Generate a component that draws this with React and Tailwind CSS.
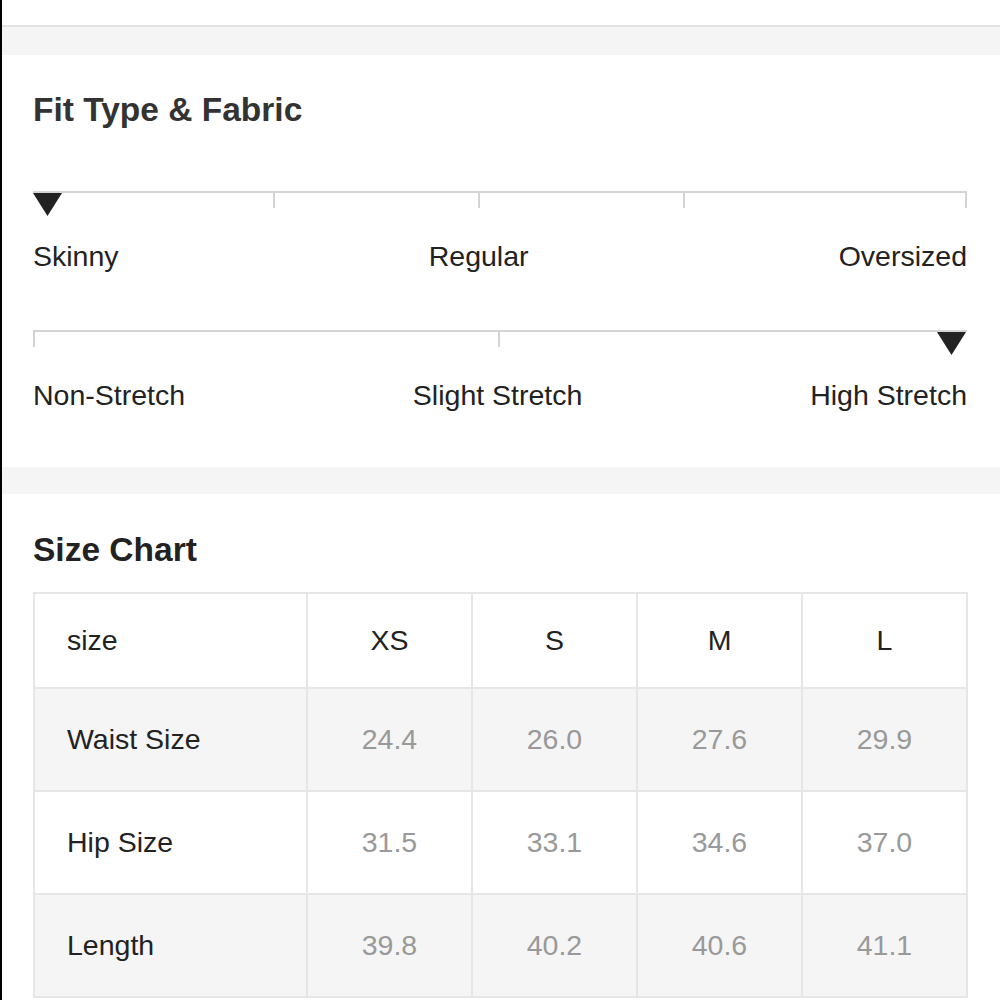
const rows = [
  { label: 'Waist Size', values: ['24.4', '26.0', '27.6', '29.9'] },
  { label: 'Hip Size', values: ['31.5', '33.1', '34.6', '37.0'] },
  { label: 'Length', values: ['39.8', '40.2', '40.6', '41.1'] },
];

function Marker({ className }) {
  return (
    <svg className={`absolute top-[2px] ${className}`} width="29" height="23" viewBox="0 0 29 23">
      <polygon points="0,0 29,0 14.5,23" fill="#222" />
    </svg>
  );
}

function Scale({ ticks, marker, labels }) {
  return (
    <div>
      <div className="relative h-[24px] w-[934px]">
        <div className="absolute left-0 right-0 top-0 h-[2px] bg-[#d4d4d4]" />
        {ticks.map((x) => (
          <div key={x} className="absolute top-0 h-[17px] w-[2px] bg-[#d4d4d4]" style={{ left: x }} />
        ))}
        {marker === 'left' ? <Marker className="left-0" /> : <Marker className="right-[1px]" />}
      </div>
      <div className="mt-[25px] flex w-[934px] items-center justify-between text-[28.5px] leading-[32px] text-[#222]">
        {labels.map((l) => (
          <span key={l}>{l}</span>
        ))}
      </div>
    </div>
  );
}

export default function App() {
  return (
    <div
      className="w-[1000px] min-h-[1000px] overflow-hidden border-l-2 border-black bg-white"
      style={{ fontFamily: '"Liberation Sans", Arial, sans-serif' }}
    >
      <div className="h-[27px] border-b-2 border-[#e3e3e3]" />
      <div className="h-[28px] bg-[#f5f5f5]" />

      <section className="pl-[31px] pt-[35px] pb-[56px]">
        <h2 className="text-[33.5px] font-bold leading-[40px] text-[#333]">Fit Type &amp; Fabric</h2>
        <div className="mt-[61px]">
          <Scale
            ticks={[240, 445, 650, 932]}
            marker="left"
            labels={['Skinny', 'Regular', 'Oversized']}
          />
        </div>
        <div className="mt-[58px]">
          <Scale
            ticks={[0, 465]}
            marker="right"
            labels={['Non-Stretch', 'Slight Stretch', 'High Stretch']}
          />
        </div>
      </section>

      <div className="h-[27px] bg-[#f5f5f5]" />

      <section className="pl-[31px] pt-[36px]">
        <h2 className="text-[33.5px] font-bold leading-[40px] text-[#222]">Size Chart</h2>
        <div className="mt-[22px] grid w-[935px] grid-cols-[271px_163px_163px_163px_163px] gap-[2px] border-2 border-[#e6e6e6] bg-[#e6e6e6] text-[28.5px]">
          <div className="flex h-[93px] items-center bg-white pl-[32px] text-[#222]">size</div>
          {['XS', 'S', 'M', 'L'].map((s) => (
            <div key={s} className="flex h-[93px] items-center justify-center bg-white text-[#222]">
              {s}
            </div>
          ))}
          {rows.map((r, i) => {
            const bg = i % 2 === 0 ? 'bg-[#f5f5f5]' : 'bg-white';
            return [
              <div key={r.label} className={`flex h-[101px] items-center pl-[32px] text-[#222] ${bg}`}>
                {r.label}
              </div>,
              ...r.values.map((v, j) => (
                <div key={r.label + j} className={`flex h-[101px] items-center justify-center text-[#999] ${bg}`}>
                  {v}
                </div>
              )),
            ];
          })}
        </div>
      </section>
    </div>
  );
}
